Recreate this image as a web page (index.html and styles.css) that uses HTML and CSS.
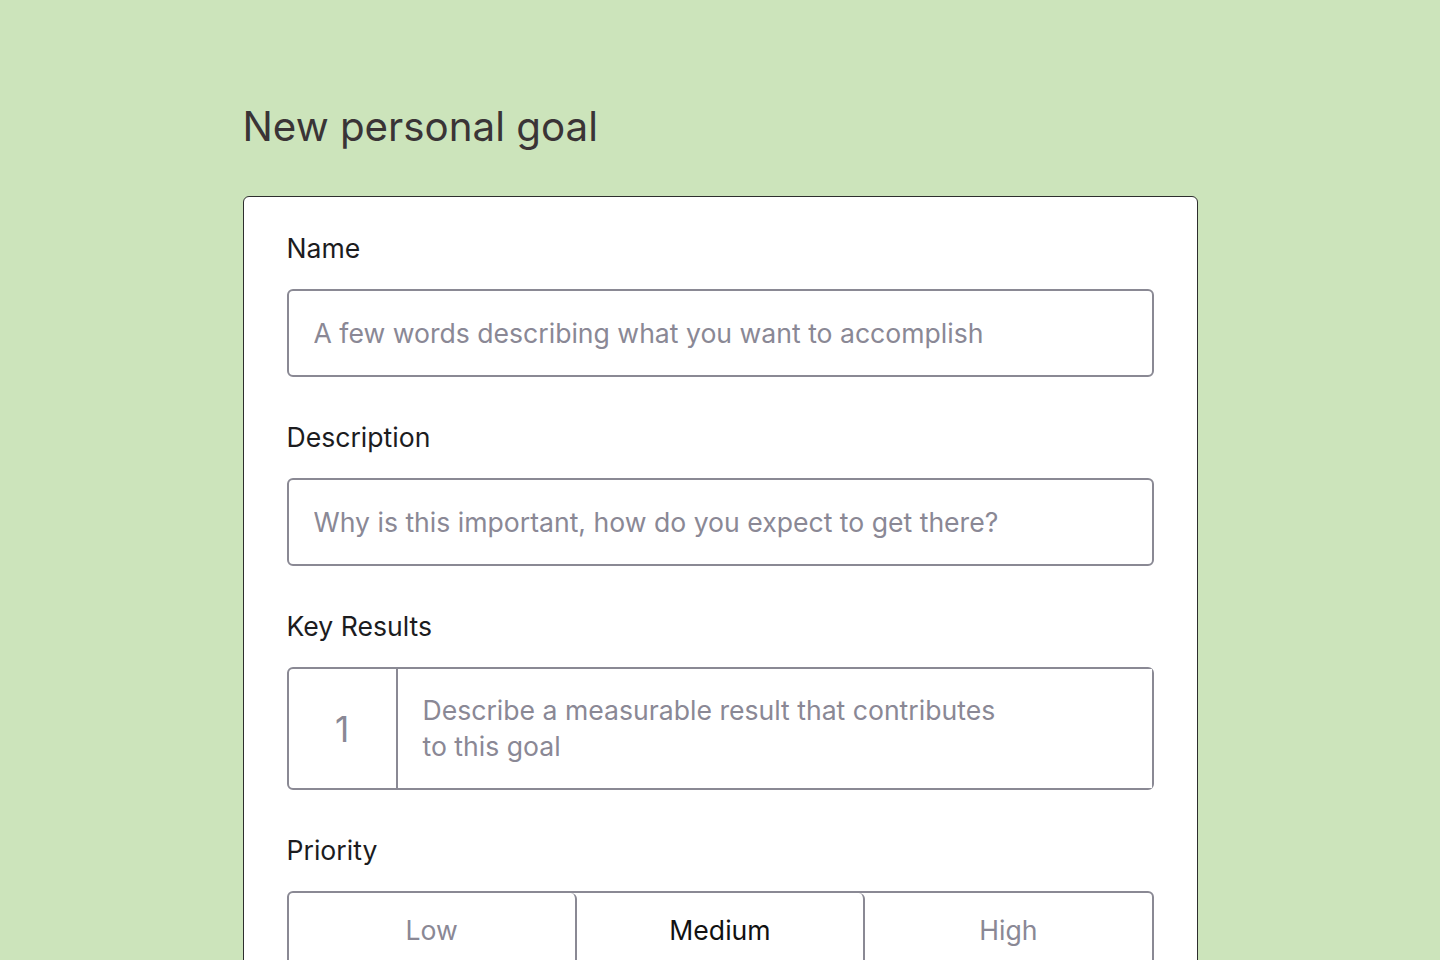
FILE: index.html
```html
<!DOCTYPE html>
<html>
<head>
    <title>New personal goal</title>
    <link rel="stylesheet" href="styles.css">
</head>
<body>
    <div class="page">
        <h1>New personal goal</h1>

        <form class="card">
            <label class="field-label" for="goalName">Name</label>
            <input class="text-input" type="text" id="goalName" placeholder="A few words describing what you want to accomplish">

            <label class="field-label" for="goalDesc">Description</label>
            <input class="text-input" type="text" id="goalDesc" placeholder="Why is this important, how do you expect to get there?">

            <label class="field-label" for="kr1">Key Results</label>
            <div class="kr-row">
                <div class="kr-num">1</div>
                <textarea class="kr-text" id="kr1" rows="2" placeholder="Describe a measurable result that contributes to this goal"></textarea>
            </div>

            <div class="field-label">Priority</div>
            <div class="segmented">
                <button type="button" class="seg">Low</button>
                <button type="button" class="seg active">Medium</button>
                <button type="button" class="seg">High</button>
            </div>
        </form>
    </div>
</body>
</html>
```

FILE: styles.css
```css
body { margin: 0; background: #cce4bb; font-family: Inter, "Noto Sans", sans-serif; }
.page { width: 955px; margin: 0 auto; padding-top: 102px; }
h1 { margin: 0 0 44px; font-size: 40.3px; font-weight: 400; line-height: 50px; color: #3a3436; }
.card { display: flex; flex-direction: column; background: #fff; border: 1px solid #2e2e2e; border-radius: 6px; padding: 33px 43px 40px; }
.field-label { font-size: 26.6px; line-height: 36px; color: #1c1c1e; margin: 0 0 23px; }
.text-input { height: 88px; box-sizing: border-box; border: 2px solid #8a8994; border-radius: 6px; padding: 0 25px; font: inherit; font-size: 26.6px; color: #333; margin-bottom: 42px; outline: none; }
.text-input::placeholder, .kr-text::placeholder { color: #8a8895; opacity: 1; }
.kr-row { display: flex; height: 123px; box-sizing: border-box; border: 2px solid #8a8994; border-radius: 6px; margin-bottom: 42px; }
.kr-num { width: 107px; border-right: 2px solid #8a8994; display: flex; align-items: center; justify-content: center; font-size: 35px; color: #8a8895; }
.kr-text { flex: 1; border: none; resize: none; outline: none; font: inherit; font-size: 26.6px; line-height: 36px; color: #333; padding: 23px 135px 23px 25px; }
.segmented { display: flex; height: 88px; box-sizing: border-box; border: 2px solid #8a8994; border-radius: 6px; }
.seg { flex: 1; background: #fff; border: none; border-right: 2px solid #8a8994; font: inherit; font-size: 26.6px; color: #8a8895; cursor: pointer; border-radius: 6px; padding-bottom: 11px; }
.seg:last-child { border-right: none; }
.seg.active { color: #111; }
```
